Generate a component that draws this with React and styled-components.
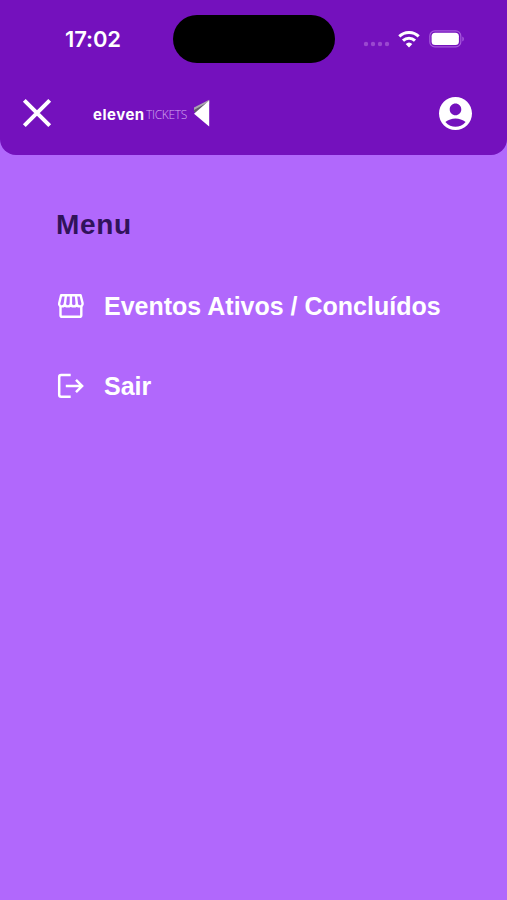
import React from 'react';
import styled, { createGlobalStyle } from 'styled-components';

const menuItems = [
  { label: 'Eventos Ativos / Concluídos', icon: 'store' },
  { label: 'Sair', icon: 'logout' },
];

const StoreIcon = () => (
  <svg width="28" height="28" viewBox="0 0 28 28" fill="none" stroke="#fff" strokeWidth="2.4" strokeLinejoin="round">
    <path d="M4.100 3.300h19.500l2 7.900c.3 1.800-1 3.200-2.800 3.200-1.700 0-3-1.300-3-3 0 1.700-1.300 3-3 3s-3-1.300-3-3c0 1.700-1.300 3-3 3s-3-1.300-3-3c0 1.700-1.300 3-3 3S1.800 13 2.200 11.200Z" />
    <path d="M8.900 3.300l-.9 8M13.900 3.300v8M18.900 3.300l.9 8" />
    <path d="M3.500 14v9.200c0 .9.700 1.600 1.600 1.600h17.600c.9 0 1.600-.7 1.600-1.600V14" />
  </svg>
);

const LogoutIcon = () => (
  <svg width="28" height="28" viewBox="0 0 28 28" fill="none" stroke="#fff" strokeWidth="2.5">
    <path d="M13.700 3H4.200c-1.200 0-2 .8-2 2v17.800c0 1.200.8 2 2 2h9.500" />
    <path d="M8.800 14h16M19 7.900l6.100 6.100-6.100 6.100" />
  </svg>
);

const App = () => {
  return (
    <Screen>
      <GlobalStyle />
      <Header>
        <StatusBar>
          <Time>17:02</Time>
          <Island />
          <StatusIcons>
            <svg width="27" height="6" viewBox="0 0 27 6" fill="#9a48cf">
              <circle cx="3" cy="3" r="2.200" />
              <circle cx="10" cy="3" r="2.200" />
              <circle cx="17" cy="3" r="2.200" />
              <circle cx="24" cy="3" r="2.200" />
            </svg>
            <svg width="22" height="17" viewBox="0 0 22 17" fill="none" stroke="#fff" strokeWidth="3">
              <path d="M1.300 5.400a14 14 0 0 1 19.400 0" />
              <path d="M5 9.600a8.700 8.700 0 0 1 12 0" />
              <path d="M7.700 13a4.900 4.900 0 0 1 6.600 0L11 16.500z" fill="#fff" stroke="none" />
            </svg>
            <svg width="36" height="18" viewBox="0 0 36 18">
              <rect x=".8" y=".9" width="31" height="16" rx="5" fill="none" stroke="#a65adb" strokeWidth="1.200" />
              <rect x="2.600" y="2.800" width="27.300" height="12.300" rx="3.500" fill="#fff" />
              <path d="M33.300 6.500c2.100.8 2.100 4.200 0 5z" fill="#a65adb" />
            </svg>
          </StatusIcons>
        </StatusBar>
        <NavBar>
          <IconButton aria-label="Fechar">
            <svg width="30" height="30" viewBox="0 0 30 30" stroke="#fff" strokeWidth="4">
              <path d="M2.300 2.300l25.400 25.400M27.700 2.300L2.300 27.700" />
            </svg>
          </IconButton>
          <Logo>
            <LogoName>eleven</LogoName>
            <LogoSuffix>TICKETS</LogoSuffix>
            <svg width="17" height="29" viewBox="0 0 17 29">
              <path d="M1 8.500L16.200.7v4L1 12.500z" fill="#aaa4b0" />
              <path d="M1 12.500V11L16.200 2.500V4.500L3 13.500z" fill="#625b6d" />
              <path d="M1 14.700L16.200 1.500v26z" fill="#fff" />
            </svg>
          </Logo>
          <IconButton aria-label="Conta">
            <svg width="33" height="33" viewBox="2 2 20 20" fill="#fff">
              <path d="M12 2C6.480 2 2 6.480 2 12s4.480 10 10 10 10-4.480 10-10S17.520 2 12 2zm0 4c1.930 0 3.500 1.570 3.500 3.500S13.930 13 12 13s-3.500-1.570-3.500-3.500S10.070 6 12 6zm0 14c-2.030 0-4.430-.820-6.140-2.880a9.947 9.947 0 0 1 12.280 0C16.430 19.180 14.030 20 12 20z" />
            </svg>
          </IconButton>
        </NavBar>
      </Header>
      <Menu>
        <MenuTitle>Menu</MenuTitle>
        <MenuList>
          {menuItems.map((item) => (
            <MenuItem key={item.label}>
              {item.icon === 'store' ? <StoreIcon /> : <LogoutIcon />}
              <span>{item.label}</span>
            </MenuItem>
          ))}
        </MenuList>
      </Menu>
    </Screen>
  );
};

const GlobalStyle = createGlobalStyle`
  * {
    box-sizing: border-box;
  }
  body {
    margin: 0;
    background: #b168fc;
  }
`;

const Screen = styled.div`
  display: flex;
  flex-direction: column;
  width: 100%;
  height: 100vh;
  background: #b168fc;
  font-family: 'Liberation Sans', Arial, sans-serif;
`;

const Header = styled.header`
  height: 155px;
  background: #7411bd;
  border-radius: 0 0 16px 16px;
`;

const StatusBar = styled.div`
  display: grid;
  grid-template-columns: 173px 162px 1fr;
  align-items: center;
  height: 78px;
`;

const Time = styled.div`
  padding-left: 65px;
  color: #fff;
  font-family: Inter, sans-serif;
  font-size: 22px;
  font-weight: 600;
  letter-spacing: -0.1px;
`;

const Island = styled.div`
  height: 48px;
  border-radius: 24px;
  background: #000;
`;

const StatusIcons = styled.div`
  display: flex;
  align-items: center;
  padding-left: 28px;
  gap: 8px;

  & svg:first-child {
    margin-top: 10px;
  }
  & svg:last-child {
    margin-left: 1px;
  }
`;

const NavBar = styled.div`
  display: flex;
  align-items: center;
  height: 70px;
  padding: 0 35px 0 22px;
`;

const IconButton = styled.button`
  display: flex;
  padding: 0;
  border: 0;
  background: none;
`;

const Logo = styled.div`
  display: flex;
  align-items: center;
  flex: 1;
  padding-left: 41px;
  color: #fff;
  line-height: 20px;

  & svg {
    margin-left: 6px;
  }
`;

const LogoName = styled.span`
  width: 53px;
  margin-top: 3px;
  font-family: Inter, sans-serif;
  font-size: 15px;
  font-weight: 700;
  letter-spacing: 0.5px;
`;

const LogoSuffix = styled.span`
  width: 41px;
  margin-top: 4px;
  color: #d3aaf0;
  font-family: 'Open Sans', sans-serif;
  font-size: 12px;
  font-weight: 300;
  letter-spacing: -0.3px;
`;

const Menu = styled.nav`
  padding: 54px 56px 0;
`;

const MenuTitle = styled.h1`
  margin: 0;
  color: #30135a;
  font-size: 28px;
  font-weight: 700;
  line-height: 32px;
  letter-spacing: 0.7px;
`;

const MenuList = styled.ul`
  display: flex;
  flex-direction: column;
  gap: 50px;
  margin: 50px 0 0;
  padding: 0 0 0 1px;
  list-style: none;
`;

const MenuItem = styled.li`
  display: flex;
  align-items: center;
  gap: 19px;
  height: 30px;
  color: #fff;
  font-size: 25px;
  font-weight: 700;
  white-space: nowrap;
`;

export default App;
